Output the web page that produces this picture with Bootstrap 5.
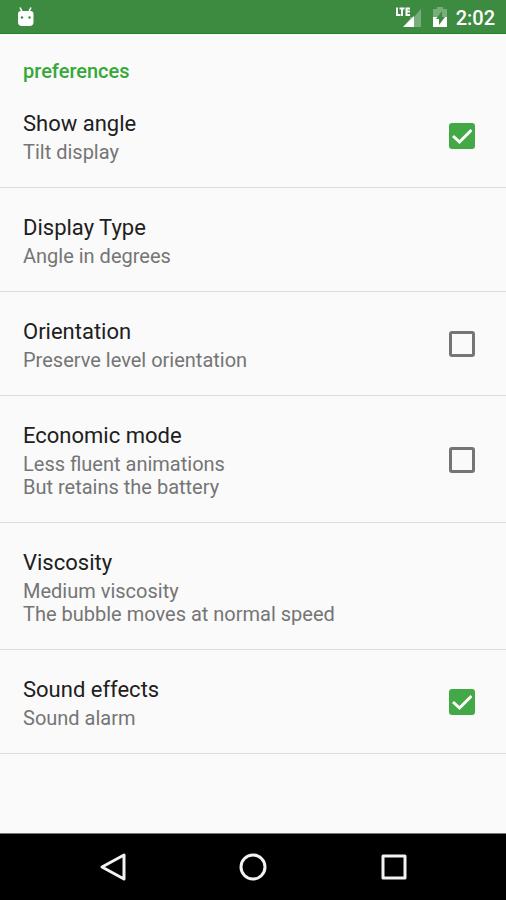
<!DOCTYPE html>
<html lang="en">
<head>
<meta charset="utf-8">
<meta name="viewport" content="width=device-width, initial-scale=1">
<title>Preferences</title>
<link href="https://cdn.jsdelivr.net/npm/bootstrap@5.3.0/dist/css/bootstrap.min.css" rel="stylesheet">
<style>
  body { font-family: Roboto, "Noto Sans", sans-serif; background: #fafafa; color: #202020; }
  .status-bar { background: #3d8b40; border-bottom: 1px solid #1d841f; height: 34px; padding: 0 11px 0 16px; }
  .clock { font-size: 20px; line-height: 24px; font-weight: 500; margin-left: 5px; padding-top: 2px; }
  .section-title { font-size: 20px; line-height: 24px; font-weight: 500; color: #35a838; padding: 25px 24px 0 23px; margin-bottom: 1px; }
  .pref-row { padding: 24px 31px 23px 23px; border-bottom: 1px solid #dcdcdc; color: inherit; }
  .pref-name { font-size: 22px; line-height: 32px; }
  .pref-note { font-size: 20px; line-height: 23px; color: #757575; margin-top: 1px; }
  .pref-row .form-check-input { width: 26px; height: 26px; border: 3px solid #757575; border-radius: 3px; background-color: transparent; box-shadow: none; }
  .pref-row .form-check-input:checked { border-color: #43a947; background-color: #43a947; background-size: 26px 26px;
    background-image: url("data:image/svg+xml,%3csvg xmlns='http://www.w3.org/2000/svg' viewBox='0 0 26 26'%3e%3cpath d='M4 13l6.500 6L22.500 7' fill='none' stroke='white' stroke-width='3'/%3e%3c/svg%3e"); }
  .nav-keys { background: #000; height: 67px; border-top: 1px solid #777; padding: 0 43px; }
</style>
<script src="https://cdn.jsdelivr.net/npm/bootstrap@5.3.0/dist/js/bootstrap.bundle.min.js"></script>
</head>
<body class="d-flex flex-column min-vh-100">
<header class="status-bar d-flex align-items-center text-white">
  <svg class="me-auto" width="20" height="22" viewBox="0 0 20 22" aria-hidden="true">
    <path d="M4 1.500l2 4M15 1.500l-2 4" stroke="#fff" stroke-width="1.600"/>
    <path d="M2 8q0-3 3-3h9.500q3 0 3 3v8q0 4-4 4H6q-4 0-4-4z" fill="#fff"/>
    <circle cx="6" cy="11.500" r="1.200" fill="#3d8b40"/><circle cx="13.500" cy="11.500" r="1.200" fill="#3d8b40"/>
  </svg>
  <svg width="27" height="22" viewBox="0 0 27 22" role="img" aria-label="LTE signal">
    <path d="M27 3v18H9l7-8V11h4z" fill="#79ae7b"/>
    <path d="M20 10v11H9z" fill="#fff"/>
    <path d="M3 1.500v7.500H6.500M5.500 2.500h5M8 2.500v7.500M16 2.500h-3.500v6.500H16M12.500 5.500H16" fill="none" stroke="#fff" stroke-width="2"/>
  </svg>
  <svg class="ms-2" width="22" height="22" viewBox="0 0 22 22" role="img" aria-label="Battery charging">
    <path d="M4 3h4V1h6v2h4v18H4z" fill="#79ae7b"/>
    <path d="M4 11h14v10H4z" fill="#fff"/>
    <path d="M13 5l-6 8h3v6l6-8h-3z" fill="#3d8b40"/>
  </svg>
  <span class="clock">2:02</span>
</header>
<main class="flex-grow-1">
  <h1 class="section-title">preferences</h1>
  <label class="pref-row d-flex align-items-center justify-content-between">
    <span><span class="pref-name d-block">Show angle</span><span class="pref-note d-block">Tilt display</span></span>
    <input class="form-check-input m-0 flex-shrink-0" type="checkbox" checked>
  </label>
  <a class="pref-row d-block text-decoration-none" href="#display-type">
    <span class="pref-name d-block">Display Type</span><span class="pref-note d-block">Angle in degrees</span>
  </a>
  <label class="pref-row d-flex align-items-center justify-content-between">
    <span><span class="pref-name d-block">Orientation</span><span class="pref-note d-block">Preserve level orientation</span></span>
    <input class="form-check-input m-0 flex-shrink-0" type="checkbox">
  </label>
  <label class="pref-row d-flex align-items-center justify-content-between">
    <span><span class="pref-name d-block">Economic mode</span><span class="pref-note d-block">Less fluent animations<br>But retains the battery</span></span>
    <input class="form-check-input m-0 flex-shrink-0" type="checkbox">
  </label>
  <a class="pref-row d-block text-decoration-none" href="#viscosity">
    <span class="pref-name d-block">Viscosity</span><span class="pref-note d-block">Medium viscosity<br>The bubble moves at normal speed</span>
  </a>
  <label class="pref-row d-flex align-items-center justify-content-between">
    <span><span class="pref-name d-block">Sound effects</span><span class="pref-note d-block">Sound alarm</span></span>
    <input class="form-check-input m-0 flex-shrink-0" type="checkbox" checked>
  </label>
</main>
<nav class="nav-keys d-flex" aria-label="System">
  <button class="btn border-0 p-0 flex-fill" type="button" aria-label="Back">
    <svg width="30" height="30" viewBox="0 0 30 30"><path d="M26 3v24L4 15z" fill="none" stroke="#f2f2f2" stroke-width="3" stroke-linejoin="round"/></svg>
  </button>
  <button class="btn border-0 p-0 flex-fill" type="button" aria-label="Home">
    <svg width="30" height="30" viewBox="0 0 30 30"><circle cx="15" cy="15" r="12" fill="none" stroke="#f2f2f2" stroke-width="3"/></svg>
  </button>
  <button class="btn border-0 p-0 flex-fill" type="button" aria-label="Recent apps">
    <svg width="30" height="30" viewBox="0 0 30 30"><path d="M5 4h22v22H5z" fill="none" stroke="#f2f2f2" stroke-width="3" stroke-linejoin="round"/></svg>
  </button>
</nav>
</body>
</html>
